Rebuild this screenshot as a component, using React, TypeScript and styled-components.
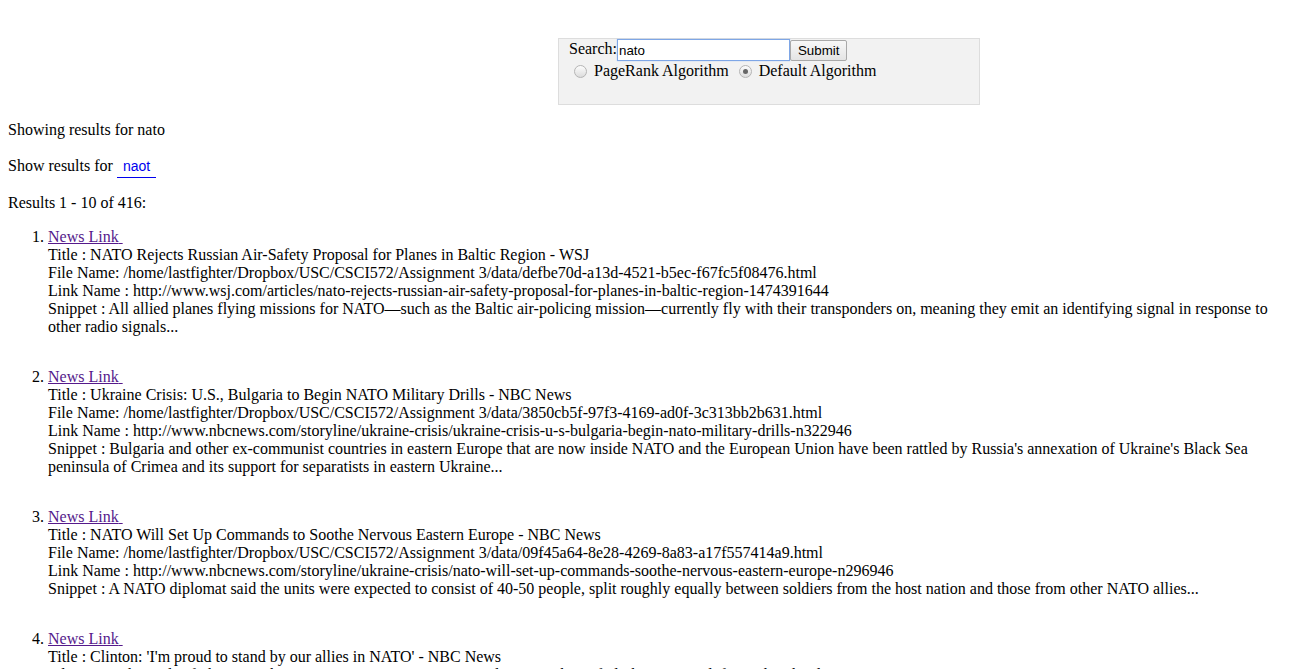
import React from "react";
import styled, { createGlobalStyle } from "styled-components";

const Global = createGlobalStyle`
  html, body { background: #fff; }
  body {
    margin: 8px;
    font-family: "Liberation Serif", "Times New Roman", serif;
    font-size: 16px;
    color: #000;
  }
`;

const SearchBox = styled.form`
  box-sizing: border-box;
  margin: 30px 0 0 550px;
  width: 422px;
  height: 67px;
  padding: 0 10px;
  background: #f2f2f2;
  border: 1px solid #dddddd;
`;

const SearchRow = styled.div`
  display: flex;
  align-items: center;
  height: 22px;
`;

const Label = styled.span`
  line-height: 18px;
  margin-bottom: 2px;
`;

const TextInput = styled.input`
  box-sizing: border-box;
  width: 173px;
  height: 22px;
  margin: 0;
  padding: 1px 1px;
  border: 1px solid #7ea6e6;
  box-shadow: 0 0 1px #9cbcf0;
  outline: none;
  background: #fff;
  font-family: "Liberation Sans", Arial, sans-serif;
  font-size: 13.33px;
  color: #000;
`;

const SubmitButton = styled.button`
  box-sizing: border-box;
  height: 21px;
  margin: 0;
  padding: 0 7px;
  border: 1px solid #a9a9a9;
  border-radius: 2px;
  background: linear-gradient(#f8f8f8, #e4e4e4);
  font-family: "Liberation Sans", Arial, sans-serif;
  font-size: 13.33px;
  color: #000;
`;

const RadioRow = styled.div`
  display: flex;
  align-items: center;
  gap: 5px;
  height: 20px;
`;

const RadioLabel = styled.label`
  display: inline-flex;
  align-items: center;
  gap: 4px;
  line-height: 18px;
`;

const Radio = styled.span<{ $checked?: boolean }>`
  box-sizing: border-box;
  position: relative;
  display: inline-block;
  width: 13px;
  height: 13px;
  margin: 1px 3px 0 5px;
  border-radius: 50%;
  border: 1px solid #b5b5b5;
  background: linear-gradient(#fdfdfd, #dcdcdc);
  &::after {
    content: "";
    display: ${(p) => (p.$checked ? "block" : "none")};
    position: absolute;
    left: 3px;
    top: 3px;
    width: 5px;
    height: 5px;
    border-radius: 50%;
    background: #666;
  }
`;

const Para = styled.p`
  margin: 16px 0;
`;

const SuggestLink = styled.a`
  display: inline-block;
  padding: 2px 6px 2px 6px;
  border-bottom: 1px solid #0000ee;
  color: #0000ee;
  text-decoration: none;
  font-family: "Liberation Sans", Arial, sans-serif;
  font-size: 14px;
  line-height: 18px;
`;

const ResultList = styled.ol`
  margin: 16px 0;
  padding-left: 40px;
`;

const Item = styled.li`
  margin-bottom: 32px;
  line-height: 18px;
`;

const NewsLink = styled.a`
  color: #551a8b;
  text-decoration: underline;
`;

type Result = {
  title: string;
  file: string;
  link: string;
  snippet: string;
};

const results: Result[] = [
  {
    title: "NATO Rejects Russian Air-Safety Proposal for Planes in Baltic Region - WSJ",
    file: "/home/lastfighter/Dropbox/USC/CSCI572/Assignment 3/data/defbe70d-a13d-4521-b5ec-f67fc5f08476.html",
    link: "http://www.wsj.com/articles/nato-rejects-russian-air-safety-proposal-for-planes-in-baltic-region-1474391644",
    snippet:
      "All allied planes flying missions for NATO\u2014such as the Baltic air-policing mission\u2014currently fly with their transponders on, meaning they emit an identifying signal in response to other radio signals...",
  },
  {
    title: "Ukraine Crisis: U.S., Bulgaria to Begin NATO Military Drills - NBC News",
    file: "/home/lastfighter/Dropbox/USC/CSCI572/Assignment 3/data/3850cb5f-97f3-4169-ad0f-3c313bb2b631.html",
    link: "http://www.nbcnews.com/storyline/ukraine-crisis/ukraine-crisis-u-s-bulgaria-begin-nato-military-drills-n322946",
    snippet:
      "Bulgaria and other ex-communist countries in eastern Europe that are now inside NATO and the European Union have been rattled by Russia's annexation of Ukraine's Black Sea peninsula of Crimea and its support for separatists in eastern Ukraine...",
  },
  {
    title: "NATO Will Set Up Commands to Soothe Nervous Eastern Europe - NBC News",
    file: "/home/lastfighter/Dropbox/USC/CSCI572/Assignment 3/data/09f45a64-8e28-4269-8a83-a17f557414a9.html",
    link: "http://www.nbcnews.com/storyline/ukraine-crisis/nato-will-set-up-commands-soothe-nervous-eastern-europe-n296946",
    snippet:
      "A NATO diplomat said the units were expected to consist of 40-50 people, split roughly equally between soldiers from the host nation and those from other NATO allies...",
  },
  {
    title: "Clinton: 'I'm proud to stand by our allies in NATO' - NBC News",
    file: "/home/lastfighter/Dropbox/USC/CSCI572/Assignment 3/data/1c6e2b7a-4f0d-4b61-9a3e-7d2f8c5e1b90.html",
    link: "http://www.nbcnews.com/video/clinton-i-m-proud-to-stand-by-our-allies-in-nato-744536643789",
    snippet:
      "Hillary Clinton says she is proud to stand by America's allies in NATO during the first presidential debate...",
  },
];

export default function App() {
  return (
    <>
      <Global />
      <SearchBox onSubmit={(e) => e.preventDefault()}>
        <SearchRow>
          <Label>Search:</Label>
          <TextInput defaultValue="nato" />
          <SubmitButton type="submit">Submit</SubmitButton>
        </SearchRow>
        <RadioRow>
          <RadioLabel>
            <Radio />
            PageRank Algorithm
          </RadioLabel>
          <RadioLabel>
            <Radio $checked />
            Default Algorithm
          </RadioLabel>
        </RadioRow>
      </SearchBox>
      <Para>Showing results for nato</Para>
      <Para>
        Show results for <SuggestLink href="#">naot</SuggestLink>
      </Para>
      <Para>Results 1 - 10 of 416:</Para>
      <ResultList>
        {results.map((r, i) => (
          <Item key={i}>
            <NewsLink href="#">News Link{"\u00a0"}</NewsLink>
            <br />
            Title : {r.title}
            <br />
            File Name: {r.file}
            <br />
            Link Name : {r.link}
            <br />
            Snippet : {r.snippet}
          </Item>
        ))}
      </ResultList>
    </>
  );
}
